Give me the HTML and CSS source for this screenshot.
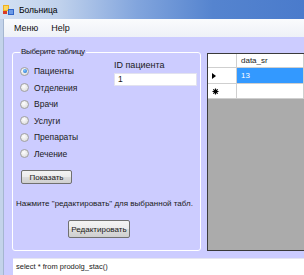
FILE: index.html
```html
<!DOCTYPE html>
<html lang="ru">
<head>
    <meta charset="UTF-8">
    <title>Больница</title>
    <link rel="stylesheet" href="styles.css">
</head>
<body>
    <div class="window">
        <div class="titlebar">
            <svg class="app-icon" width="11" height="11" viewBox="0 0 11 11">
                <rect x="0" y="1" width="6" height="6" fill="#f0b020"/>
                <rect x="1" y="2" width="4" height="4" fill="#fbd860"/>
                <rect x="5" y="5" width="6" height="6" fill="#2f64c8"/>
                <rect x="6" y="6" width="4" height="4" fill="#6b9ae6"/>
                <rect x="0" y="7" width="4" height="3" fill="#d83c28"/>
            </svg>
            <span class="title">Больница</span>
        </div>
        <div class="frame">
            <div class="edge"></div>
            <div class="main">
                <div class="menubar">
                    <span class="menu-item">Меню</span>
                    <span class="menu-item">Help</span>
                </div>
                <div class="client">
                    <fieldset class="groupbox">
                        <legend>Выберите таблицу</legend>
                        <div class="top">
                            <div class="radios">
                                <div class="radio-row"><span class="radio checked"></span>Пациенты</div>
                                <div class="radio-row"><span class="radio"></span>Отделения</div>
                                <div class="radio-row"><span class="radio"></span>Врачи</div>
                                <div class="radio-row"><span class="radio"></span>Услуги</div>
                                <div class="radio-row"><span class="radio"></span>Препараты</div>
                                <div class="radio-row"><span class="radio"></span>Лечение</div>
                            </div>
                            <div class="idcol">
                                <div class="id-label">ID пациента</div>
                                <div class="textbox">1</div>
                            </div>
                        </div>
                        <div class="btn btn-show">Показать</div>
                        <div class="hint">Нажмите "редактировать" для выбранной табл.</div>
                        <div class="btn btn-edit">Редактировать</div>
                    </fieldset>
                    <div class="datagrid">
                        <div class="cell corner"></div>
                        <div class="cell colhead">data_sr</div>
                        <div class="cell rowhead"><span class="arrow"></span></div>
                        <div class="cell selected">13</div>
                        <div class="cell rowhead">
                            <svg width="7" height="7" viewBox="0 0 7 7">
                                <path d="M3.5 0.5V6.5M0.5 3.5H6.5M1.3 1.3L5.7 5.7M5.7 1.3L1.3 5.7" stroke="#000" stroke-width="1.2"/>
                            </svg>
                        </div>
                        <div class="cell newrow"></div>
                        <div class="workspace"></div>
                    </div>
                </div>
                <div class="sqlbar">
                    <div class="sqlbox">select * from prodolg_stac()</div>
                </div>
            </div>
        </div>
    </div>
</body>
</html>
```

FILE: styles.css
```css
body {
    margin: 0;
    width: 304px;
    height: 275px;
    overflow: hidden;
    font-family: "Liberation Sans", Arial, sans-serif;
    font-size: 9px;
    color: #1a1a1a;
    background-color: #ccccff;
}

.window {
    display: flex;
    flex-direction: column;
    height: 275px;
}

.titlebar {
    height: 19px;
    display: flex;
    align-items: center;
    padding-left: 3px;
    background: linear-gradient(to right, #d3e0f2 0%, #bfd1ec 20%, #82a5dd 45%, #5584cf 70%, #4a7bcc 100%);
    flex-shrink: 0;
}

.app-icon {
    margin-right: 5px;
}

.title {
    font-size: 8.5px;
    color: #000;
}

.frame {
    flex: 1;
    display: flex;
    min-width: 0;
}

.edge {
    width: 4px;
    flex-shrink: 0;
    background-color: #c3d3ea;
    border-right: 1px solid #a4b6d0;
    box-sizing: border-box;
}

.main {
    flex: 1;
    min-width: 0;
    display: flex;
    flex-direction: column;
    background-color: #ccccff;
}

.menubar {
    height: 18px;
    display: flex;
    align-items: center;
    background: linear-gradient(#fafbfd, #eef1f7);
    padding-left: 10px;
}

.menu-item {
    margin-right: 13px;
    font-size: 9px;
    color: #111;
}

.client {
    display: flex;
    align-items: flex-start;
    padding: 9px 0 0 8px;
    height: 212px;
}

.groupbox {
    width: 188px;
    height: 205px;
    flex-shrink: 0;
    box-sizing: border-box;
    margin: 0;
    padding: 0 3px;
    border: 1px solid #fff;
    border-radius: 3px;
}

.groupbox legend {
    font-size: 8px;
    letter-spacing: -0.35px;
    line-height: 12px;
    padding: 0 1px;
    margin-left: 4px;
}

.top {
    display: flex;
    align-items: flex-start;
}

.radios {
    width: 98px;
    padding: 5px 0 0 4px;
    box-sizing: border-box;
}

.radio-row {
    height: 16.5px;
    display: flex;
    align-items: center;
    font-size: 8.5px;
}

.radio {
    width: 7px;
    height: 7px;
    border: 1px solid #a0a0a0;
    border-radius: 50%;
    margin-right: 5px;
    background: radial-gradient(circle at 40% 35%, #fdfdfd, #d6d6d6);
    display: flex;
    align-items: center;
    justify-content: center;
}

.radio.checked::after {
    content: "";
    width: 4px;
    height: 4px;
    border-radius: 50%;
    background: radial-gradient(circle at 40% 35%, #7cc4ff, #1a66c8);
}

.idcol {
    margin-top: 1px;
}

.id-label {
    line-height: 12px;
    font-size: 9px;
}

.textbox {
    margin-top: 2px;
    width: 83px;
    height: 13px;
    box-sizing: border-box;
    background-color: #fff;
    border: 1px solid #e2e2ef;
    padding-left: 3px;
    font-size: 8.5px;
    line-height: 11px;
}

.btn {
    box-sizing: border-box;
    border: 1px solid #707070;
    border-radius: 2px;
    background: linear-gradient(#f3f3f3 0%, #ebebeb 50%, #dddddd 51%, #cfcfcf 100%);
    display: flex;
    align-items: center;
    justify-content: center;
    font-size: 8px;
}

.btn-show {
    width: 51px;
    height: 14px;
    margin: 8px 0 0 5px;
}

.hint {
    margin-top: 14px;
    line-height: 12px;
    font-size: 8px;
    white-space: nowrap;
}

.btn-edit {
    width: 62px;
    height: 18px;
    margin: 10px 0 0 52px;
}

.datagrid {
    margin: 7px 0 0 6px;
    flex: 1;
    min-width: 0;
    height: 198px;
    box-sizing: border-box;
    border: 1px solid #3a3a3a;
    border-right: none;
    background-color: #ababab;
    display: grid;
    grid-template-columns: 29px 1fr;
    grid-template-rows: 14px 16px 15px 1fr;
}

.cell {
    background-color: #fff;
    border-right: 1px solid #cfcfcf;
    border-bottom: 1px solid #cfcfcf;
    display: flex;
    align-items: center;
    font-size: 8px;
}

.colhead {
    padding-left: 4px;
    color: #222;
}

.rowhead {
    padding-left: 4px;
}

.arrow {
    width: 0;
    height: 0;
    border-top: 3.5px solid transparent;
    border-bottom: 3.5px solid transparent;
    border-left: 4px solid #000;
}

.selected {
    background-color: #3399ff;
    color: #fff;
    padding-left: 4px;
}

.workspace {
    grid-column: 1 / 3;
}

.sqlbar {
    flex: 1;
    padding-left: 9px;
}

.sqlbox {
    height: 100%;
    background-color: #fff;
    border-top: 1px solid #e6e6f2;
    padding-left: 3px;
    font-size: 7.5px;
    line-height: 16px;
}
```
